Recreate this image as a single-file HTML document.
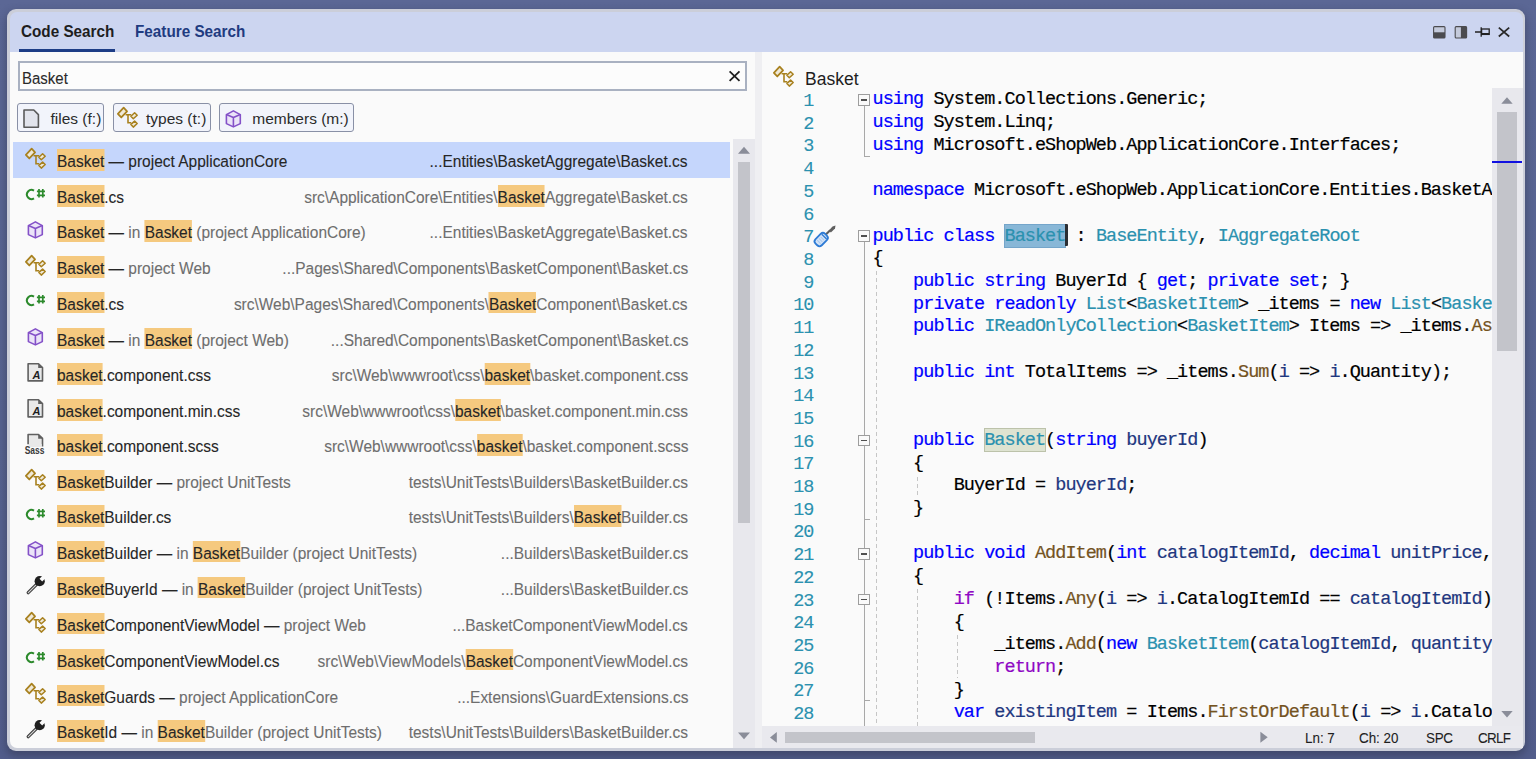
<!DOCTYPE html>
<html><head><meta charset="utf-8"><style>
*{margin:0;padding:0;box-sizing:border-box}
html,body{width:1536px;height:759px;overflow:hidden}
body{background:linear-gradient(180deg,#5b6795 0%,#56628f 70%,#525d8b 100%);font-family:"Liberation Sans",sans-serif;position:relative}
.win{position:absolute;left:7px;top:9px;width:1518px;height:742px;border-radius:9px;background:#cbced9;overflow:hidden;box-shadow:0 4px 9px 1px rgba(35,38,55,0.38)}
.hdr{position:absolute;left:3px;top:2.5px;right:2px;height:40.5px;background:#ccd5f0;border-radius:7px 7px 0 0}
.content{position:absolute;left:3px;top:43px;right:2px;bottom:3px;background:#fafafa;border-radius:0 0 7px 7px;overflow:hidden}
.abs{position:absolute}
.tab{position:absolute;top:22.4px;font-weight:bold;font-size:16.6px;line-height:20px;white-space:nowrap;transform:scaleX(0.92);transform-origin:0 0}
.row{position:absolute;left:12.8px;width:717.2px;height:35.75px;font-size:16.3px;color:#262626;white-space:nowrap;-webkit-text-stroke:0.1px currentColor}
.row.sel{background:#c5d6fc;height:36px}
.row .ic{position:absolute;left:7.2px;top:2px;width:30px;height:30px}
.row .ic.ty{top:2.3px}
.row .nm{position:absolute;left:44.2px;top:7.5px;line-height:21.5px;transform:scaleX(0.95);transform-origin:0 0}
.row .pt{position:absolute;right:42px;top:7.5px;line-height:21.5px;transform:scaleX(0.95);transform-origin:100% 0}
b.h{font-weight:normal;background:#f5c97f;color:#262626;display:inline-block;height:21.5px;padding-top:2px}
i.g{font-style:normal;color:#6e6e6e}
b.h.z{background:transparent;width:0}
.row.sel i.g{color:#262626}
.btn{position:absolute;top:103px;height:29px;border:1px solid #8990a6;border-radius:3px;background:#f2f4fb;font-size:15.5px;color:#1e1e1e;white-space:nowrap}
.btn svg{position:absolute}
.btn span{position:absolute;top:5.8px;line-height:18px;color:#2b2b2b}
.code{position:absolute;left:0;top:0;width:1536px;height:759px;font-family:"Liberation Mono",monospace;font-size:18.5px;letter-spacing:-0.95px;color:#000;-webkit-text-stroke:0.2px currentColor}
.ln{position:absolute;left:872.5px;padding-top:2.3px;line-height:22.71px;height:22.71px;white-space:pre}
.num{position:absolute;left:780px;width:33.5px;text-align:right;line-height:22.71px;color:#2b91af;padding-top:4px;height:22.71px;-webkit-text-stroke:0.1px currentColor}
.k{color:#0000ff} .c{color:#8f08c4} .t{color:#2b91af} .m{color:#74531f} .p{color:#1f377f}
.hl7{position:absolute;left:1004.2px;top:224.2px;width:61.6px;height:23.4px;background:#88b7d7;box-shadow:inset 0 0 0 1px #74a5ca}
.hl16{position:absolute;left:983.9px;top:428px;width:61.8px;height:23.5px;background:#dee3d1;box-shadow:inset 0 0 0 1px #bcc2aa}
.fb{position:absolute;left:858.2px;width:11.7px;height:11.8px;border:1px solid #9d9d9d;background:#fafafa}
.fb:after{content:"";position:absolute;left:1.9px;top:4.2px;width:5.9px;height:1.6px;background:#505050}
.dg{position:absolute;width:1px;background:repeating-linear-gradient(180deg,#c6c6c6 0 4px,transparent 4px 7px)}
.st{position:absolute;top:728.5px;font-size:15.4px;line-height:18px;color:#1e1e1e;white-space:nowrap;-webkit-text-stroke:0.1px currentColor;transform:scaleX(0.87);transform-origin:0 0}
</style></head><body>
<div class="win">
 <div class="hdr"></div>
 <div class="content"></div>
</div>
<!-- tabs -->
<div class="tab" style="left:20.6px;color:#1e1e1e">Code Search</div>
<div class="abs" style="left:19px;top:49.3px;width:96px;height:2.7px;background:#1d3d86"></div>
<div class="tab" style="left:135.4px;color:#1f3b80">Feature Search</div>
<!-- window buttons -->
<svg class="abs" style="left:1430px;top:24px" width="84" height="17" viewBox="1430 24 84 17">
 <rect x="1433.6" y="26.6" width="11.4" height="11.4" rx="1" fill="#c4cadb" stroke="#4b4b4f" stroke-width="1.1"/>
 <rect x="1433.6" y="32.3" width="11.4" height="5.7" fill="#4b4b4f"/>
 <rect x="1455.2" y="26.6" width="11.4" height="11.4" rx="1" fill="#c4cadb" stroke="#4b4b4f" stroke-width="1.1"/>
 <rect x="1460.9" y="26.6" width="5.7" height="11.4" fill="#4b4b4f"/>
 <path d="M1475 32H1481M1481.2 27.3V36.7" stroke="#222" stroke-width="1.3"/>
 <rect x="1481.6" y="29" width="7.6" height="5.4" fill="none" stroke="#222" stroke-width="1.3"/>
 <rect x="1481.6" y="33" width="7.6" height="1.6" fill="#222"/>
 <path d="M1498.8 27.7L1509.2 36.5M1509.2 27.7L1498.8 36.5" stroke="#2a2a2a" stroke-width="1.75"/>
</svg>
<!-- search box -->
<div class="abs" style="left:18px;top:61.3px;width:729px;height:29.3px;border:2px solid #a9b1c1;background:#fcfcfc"></div>
<div class="abs" style="left:21.5px;top:67.6px;font-size:16.3px;line-height:21px;color:#2a2a2a;-webkit-text-stroke:0.1px currentColor;transform:scaleX(0.92);transform-origin:0 0">Basket</div>
<svg class="abs" style="left:727px;top:69px" width="16" height="16" viewBox="0 0 16 16"><path d="M2.6 2.3L12.5 11.8M12.5 2.3L2.6 11.8" stroke="#1e1e1e" stroke-width="1.8"/></svg>
<!-- filter buttons -->
<div class="btn" style="left:17px;width:87.4px"><svg style="left:5.1px;top:4.6px" width="18" height="20" viewBox="0 0 18 20"><path d="M1 1H10.8L15.4 5.6V18.2H1Z" fill="#e2e4ec" stroke="#5a5a5a" stroke-width="1.6" stroke-linejoin="round"/></svg><span style="left:32.5px">files (f:)</span></div>
<div class="btn" style="left:113px;width:98px"><div style="position:absolute;left:-2.5px;top:-1px"><svg width="30" height="30" viewBox="0 0 30 30"><g fill="#efe9d8" stroke="#a8811f" stroke-width="1.75" stroke-linejoin="round"><polygon points="11.66,4.7 15.06,8.3 9.29,14.46 5.88,10.87"/></g><g fill="#efe9d8" stroke="#a8811f" stroke-width="1.5" stroke-linejoin="round"><polygon points="22.6,9.8 25.2,12.3 21.3,15.8 18.9,13.2"/><polygon points="22.6,18.1 25.2,20.5 21.3,24.1 18.9,21.4"/></g><path d="M13.6 11.7H19.2M16 11.7V19.8H19.2" fill="none" stroke="#a8811f" stroke-width="1.6"/></svg></div><span style="left:32px">types (t:)</span></div>
<div class="btn" style="left:219.3px;width:134.5px"><div style="position:absolute;left:-2px;top:-0.5px"><svg width="30" height="30" viewBox="0 0 30 30"><g fill="#ebe4f8" stroke="#8451c8" stroke-width="1.6" stroke-linejoin="round"><polygon points="15.4,6.9 22.3,10.6 22.3,19.6 15.4,22.9 8.4,19.6 8.4,10.6"/><path d="M8.4 10.6L15.4 13.6L22.3 10.6M15.4 13.6V22.9" fill="none"/></g></svg></div><span style="left:32px">members (m:)</span></div>
<!-- list -->
<div class="row sel" style="top:141.65px"><div class="ic ty"><svg width="30" height="30" viewBox="0 0 30 30"><g fill="#efe9d8" stroke="#a8811f" stroke-width="1.75" stroke-linejoin="round"><polygon points="11.66,4.7 15.06,8.3 9.29,14.46 5.88,10.87"/></g><g fill="#efe9d8" stroke="#a8811f" stroke-width="1.5" stroke-linejoin="round"><polygon points="22.6,9.8 25.2,12.3 21.3,15.8 18.9,13.2"/><polygon points="22.6,18.1 25.2,20.5 21.3,24.1 18.9,21.4"/></g><path d="M13.6 11.7H19.2M16 11.7V19.8H19.2" fill="none" stroke="#a8811f" stroke-width="1.6"/></svg></div><div class="nm"><b class="h z">&#8203;</b><b class="h">Basket</b> — <i class="g">project ApplicationCore</i></div><div class="pt"><i class="g">...Entities\BasketAggregate\Basket.cs</i><b class="h z">&#8203;</b></div></div><div class="row" style="top:177.55px"><div class="ic"><svg width="30" height="30" viewBox="0 0 30 30"><path d="M14 10.6A4.6 4.6 0 1 0 14 18.4" fill="none" stroke="#2c8a2c" stroke-width="2"/><path d="M19 9.1V17.4M22.8 9.1V17.4M16.9 11.3H25M16.9 15.3H25" stroke="#2c8a2c" stroke-width="1.7"/></svg></div><div class="nm"><b class="h z">&#8203;</b><b class="h">Basket</b>.cs</div><div class="pt"><i class="g">src\ApplicationCore\Entities\</i><b class="h">Basket</b><i class="g">Aggregate\Basket.cs</i><b class="h z">&#8203;</b></div></div><div class="row" style="top:212.95px"><div class="ic"><svg width="30" height="30" viewBox="0 0 30 30"><g fill="#ebe4f8" stroke="#8451c8" stroke-width="1.6" stroke-linejoin="round"><polygon points="15.4,6.9 22.3,10.6 22.3,19.6 15.4,22.9 8.4,19.6 8.4,10.6"/><path d="M8.4 10.6L15.4 13.6L22.3 10.6M15.4 13.6V22.9" fill="none"/></g></svg></div><div class="nm"><b class="h z">&#8203;</b><b class="h">Basket</b> — <i class="g">in </i><b class="h">Basket</b><i class="g"> (project ApplicationCore)</i></div><div class="pt"><i class="g">...Entities\BasketAggregate\Basket.cs</i><b class="h z">&#8203;</b></div></div><div class="row" style="top:248.85px"><div class="ic ty"><svg width="30" height="30" viewBox="0 0 30 30"><g fill="#efe9d8" stroke="#a8811f" stroke-width="1.75" stroke-linejoin="round"><polygon points="11.66,4.7 15.06,8.3 9.29,14.46 5.88,10.87"/></g><g fill="#efe9d8" stroke="#a8811f" stroke-width="1.5" stroke-linejoin="round"><polygon points="22.6,9.8 25.2,12.3 21.3,15.8 18.9,13.2"/><polygon points="22.6,18.1 25.2,20.5 21.3,24.1 18.9,21.4"/></g><path d="M13.6 11.7H19.2M16 11.7V19.8H19.2" fill="none" stroke="#a8811f" stroke-width="1.6"/></svg></div><div class="nm"><b class="h z">&#8203;</b><b class="h">Basket</b> — <i class="g">project Web</i></div><div class="pt"><i class="g">...Pages\Shared\Components\BasketComponent\Basket.cs</i><b class="h z">&#8203;</b></div></div><div class="row" style="top:284.35px"><div class="ic"><svg width="30" height="30" viewBox="0 0 30 30"><path d="M14 10.6A4.6 4.6 0 1 0 14 18.4" fill="none" stroke="#2c8a2c" stroke-width="2"/><path d="M19 9.1V17.4M22.8 9.1V17.4M16.9 11.3H25M16.9 15.3H25" stroke="#2c8a2c" stroke-width="1.7"/></svg></div><div class="nm"><b class="h z">&#8203;</b><b class="h">Basket</b>.cs</div><div class="pt"><i class="g">src\Web\Pages\Shared\Components\</i><b class="h">Basket</b><i class="g">Component\Basket.cs</i><b class="h z">&#8203;</b></div></div><div class="row" style="top:320.05px"><div class="ic"><svg width="30" height="30" viewBox="0 0 30 30"><g fill="#ebe4f8" stroke="#8451c8" stroke-width="1.6" stroke-linejoin="round"><polygon points="15.4,6.9 22.3,10.6 22.3,19.6 15.4,22.9 8.4,19.6 8.4,10.6"/><path d="M8.4 10.6L15.4 13.6L22.3 10.6M15.4 13.6V22.9" fill="none"/></g></svg></div><div class="nm"><b class="h z">&#8203;</b><b class="h">Basket</b> — <i class="g">in </i><b class="h">Basket</b><i class="g"> (project Web)</i></div><div class="pt"><i class="g">...Shared\Components\BasketComponent\Basket.cs</i><b class="h z">&#8203;</b></div></div><div class="row" style="top:355.85px"><div class="ic"><svg width="30" height="30" viewBox="0 0 30 30"><path d="M8.1 5.7H18.5L22.5 9.6V22.9H8.1Z" fill="#e9e9e9" stroke="#606060" stroke-width="1.6" stroke-linejoin="round"/><path d="M18.2 5.4L22.9 10H18.2Z" fill="#606060"/><text x="12.6" y="21.1" font-family="Liberation Sans" font-weight="bold" font-style="italic" font-size="11" fill="#1e1e1e" stroke="none">A</text></svg></div><div class="nm"><b class="h z">&#8203;</b><b class="h">basket</b>.component.css</div><div class="pt"><i class="g">src\Web\wwwroot\css\</i><b class="h">basket</b><i class="g">\basket.component.css</i><b class="h z">&#8203;</b></div></div><div class="row" style="top:391.55px"><div class="ic"><svg width="30" height="30" viewBox="0 0 30 30"><path d="M8.1 5.7H18.5L22.5 9.6V22.9H8.1Z" fill="#e9e9e9" stroke="#606060" stroke-width="1.6" stroke-linejoin="round"/><path d="M18.2 5.4L22.9 10H18.2Z" fill="#606060"/><text x="12.6" y="21.1" font-family="Liberation Sans" font-weight="bold" font-style="italic" font-size="11" fill="#1e1e1e" stroke="none">A</text></svg></div><div class="nm"><b class="h z">&#8203;</b><b class="h">basket</b>.component.min.css</div><div class="pt"><i class="g">src\Web\wwwroot\css\</i><b class="h">basket</b><i class="g">\basket.component.min.css</i><b class="h z">&#8203;</b></div></div><div class="row" style="top:426.95px"><div class="ic"><svg width="30" height="30" viewBox="0 0 30 30"><path d="M8.1 15.2V5.5H18.5L22.5 9.4V17.6" fill="#e9e9e9" stroke="#606060" stroke-width="1.6" stroke-linejoin="round"/><path d="M18.2 5.2L22.9 9.7H18.2Z" fill="#606060"/><rect x="8.9" y="15" width="12.8" height="3" fill="#e9e9e9"/><text x="4.7" y="24.9" font-family="Liberation Sans" font-weight="bold" font-size="11.8" fill="#3a3a3a" stroke="none" textLength="19.8" lengthAdjust="spacingAndGlyphs">Sass</text></svg></div><div class="nm"><b class="h z">&#8203;</b><b class="h">basket</b>.component.scss</div><div class="pt"><i class="g">src\Web\wwwroot\css\</i><b class="h">basket</b><i class="g">\basket.component.scss</i><b class="h z">&#8203;</b></div></div><div class="row" style="top:462.25px"><div class="ic ty"><svg width="30" height="30" viewBox="0 0 30 30"><g fill="#efe9d8" stroke="#a8811f" stroke-width="1.75" stroke-linejoin="round"><polygon points="11.66,4.7 15.06,8.3 9.29,14.46 5.88,10.87"/></g><g fill="#efe9d8" stroke="#a8811f" stroke-width="1.5" stroke-linejoin="round"><polygon points="22.6,9.8 25.2,12.3 21.3,15.8 18.9,13.2"/><polygon points="22.6,18.1 25.2,20.5 21.3,24.1 18.9,21.4"/></g><path d="M13.6 11.7H19.2M16 11.7V19.8H19.2" fill="none" stroke="#a8811f" stroke-width="1.6"/></svg></div><div class="nm"><b class="h z">&#8203;</b><b class="h">Basket</b>Builder — <i class="g">project UnitTests</i></div><div class="pt"><i class="g">tests\UnitTests\Builders\BasketBuilder.cs</i><b class="h z">&#8203;</b></div></div><div class="row" style="top:497.55px"><div class="ic"><svg width="30" height="30" viewBox="0 0 30 30"><path d="M14 10.6A4.6 4.6 0 1 0 14 18.4" fill="none" stroke="#2c8a2c" stroke-width="2"/><path d="M19 9.1V17.4M22.8 9.1V17.4M16.9 11.3H25M16.9 15.3H25" stroke="#2c8a2c" stroke-width="1.7"/></svg></div><div class="nm"><b class="h z">&#8203;</b><b class="h">Basket</b>Builder.cs</div><div class="pt"><i class="g">tests\UnitTests\Builders\</i><b class="h">Basket</b><i class="g">Builder.cs</i><b class="h z">&#8203;</b></div></div><div class="row" style="top:533.45px"><div class="ic"><svg width="30" height="30" viewBox="0 0 30 30"><g fill="#ebe4f8" stroke="#8451c8" stroke-width="1.6" stroke-linejoin="round"><polygon points="15.4,6.9 22.3,10.6 22.3,19.6 15.4,22.9 8.4,19.6 8.4,10.6"/><path d="M8.4 10.6L15.4 13.6L22.3 10.6M15.4 13.6V22.9" fill="none"/></g></svg></div><div class="nm"><b class="h z">&#8203;</b><b class="h">Basket</b>Builder — <i class="g">in </i><b class="h">Basket</b><i class="g">Builder (project UnitTests)</i></div><div class="pt"><i class="g">...Builders\BasketBuilder.cs</i><b class="h z">&#8203;</b></div></div><div class="row" style="top:569.35px"><div class="ic"><svg width="30" height="30" viewBox="0 0 30 30"><path d="M16.6 13.3L8.2 21.7" stroke="#3c3c3c" stroke-width="3.3" stroke-linecap="round"/><path d="M15.6 14.3L8.3 21.6" stroke="#d4d4d4" stroke-width="1.2" stroke-linecap="round"/><circle cx="19.7" cy="10.2" r="5.1" fill="#1f1f1f"/><rect x="1.6" y="-1.9" width="6" height="3.8" fill="#fafafa" transform="translate(19.7 10.2) rotate(-45)"/></svg></div><div class="nm"><b class="h z">&#8203;</b><b class="h">Basket</b>BuyerId — <i class="g">in </i><b class="h">Basket</b><i class="g">Builder (project UnitTests)</i></div><div class="pt"><i class="g">...Builders\BasketBuilder.cs</i><b class="h z">&#8203;</b></div></div><div class="row" style="top:605.45px"><div class="ic ty"><svg width="30" height="30" viewBox="0 0 30 30"><g fill="#efe9d8" stroke="#a8811f" stroke-width="1.75" stroke-linejoin="round"><polygon points="11.66,4.7 15.06,8.3 9.29,14.46 5.88,10.87"/></g><g fill="#efe9d8" stroke="#a8811f" stroke-width="1.5" stroke-linejoin="round"><polygon points="22.6,9.8 25.2,12.3 21.3,15.8 18.9,13.2"/><polygon points="22.6,18.1 25.2,20.5 21.3,24.1 18.9,21.4"/></g><path d="M13.6 11.7H19.2M16 11.7V19.8H19.2" fill="none" stroke="#a8811f" stroke-width="1.6"/></svg></div><div class="nm"><b class="h z">&#8203;</b><b class="h">Basket</b>ComponentViewModel — <i class="g">project Web</i></div><div class="pt"><i class="g">...BasketComponentViewModel.cs</i><b class="h z">&#8203;</b></div></div><div class="row" style="top:641.25px"><div class="ic"><svg width="30" height="30" viewBox="0 0 30 30"><path d="M14 10.6A4.6 4.6 0 1 0 14 18.4" fill="none" stroke="#2c8a2c" stroke-width="2"/><path d="M19 9.1V17.4M22.8 9.1V17.4M16.9 11.3H25M16.9 15.3H25" stroke="#2c8a2c" stroke-width="1.7"/></svg></div><div class="nm"><b class="h z">&#8203;</b><b class="h">Basket</b>ComponentViewModel.cs</div><div class="pt"><i class="g">src\Web\ViewModels\</i><b class="h">Basket</b><i class="g">ComponentViewModel.cs</i><b class="h z">&#8203;</b></div></div><div class="row" style="top:677.15px"><div class="ic ty"><svg width="30" height="30" viewBox="0 0 30 30"><g fill="#efe9d8" stroke="#a8811f" stroke-width="1.75" stroke-linejoin="round"><polygon points="11.66,4.7 15.06,8.3 9.29,14.46 5.88,10.87"/></g><g fill="#efe9d8" stroke="#a8811f" stroke-width="1.5" stroke-linejoin="round"><polygon points="22.6,9.8 25.2,12.3 21.3,15.8 18.9,13.2"/><polygon points="22.6,18.1 25.2,20.5 21.3,24.1 18.9,21.4"/></g><path d="M13.6 11.7H19.2M16 11.7V19.8H19.2" fill="none" stroke="#a8811f" stroke-width="1.6"/></svg></div><div class="nm"><b class="h z">&#8203;</b><b class="h">Basket</b>Guards — <i class="g">project ApplicationCore</i></div><div class="pt"><i class="g">...Extensions\GuardExtensions.cs</i><b class="h z">&#8203;</b></div></div><div class="row" style="top:712.95px"><div class="ic"><svg width="30" height="30" viewBox="0 0 30 30"><path d="M16.6 13.3L8.2 21.7" stroke="#3c3c3c" stroke-width="3.3" stroke-linecap="round"/><path d="M15.6 14.3L8.3 21.6" stroke="#d4d4d4" stroke-width="1.2" stroke-linecap="round"/><circle cx="19.7" cy="10.2" r="5.1" fill="#1f1f1f"/><rect x="1.6" y="-1.9" width="6" height="3.8" fill="#fafafa" transform="translate(19.7 10.2) rotate(-45)"/></svg></div><div class="nm"><b class="h z">&#8203;</b><b class="h">Basket</b>Id — <i class="g">in </i><b class="h">Basket</b><i class="g">Builder (project UnitTests)</i></div><div class="pt"><i class="g">tests\UnitTests\Builders\BasketBuilder.cs</i><b class="h z">&#8203;</b></div></div>
<!-- list scrollbar -->
<div class="abs" style="left:732.8px;top:139px;width:22.2px;height:609px;background:#e8e8ed"></div>
<svg class="abs" style="left:733px;top:140px" width="22" height="20" viewBox="0 0 22 20"><path d="M5 13.7L11 6.8L17 13.7Z" fill="#8a8d99"/></svg>
<div class="abs" style="left:738px;top:161.6px;width:12px;height:361px;background:#c3c4ca"></div>
<svg class="abs" style="left:733px;top:726px" width="22" height="20" viewBox="0 0 22 20"><path d="M5 6.5L11 13.3L17 6.5Z" fill="#8a8d99"/></svg>
<div class="abs" style="left:755px;top:52px;width:7px;height:696px;background:#efeff2"></div>
<!-- right header -->
<div class="abs" style="left:768px;top:62px;width:30px;height:30px"><svg width="30" height="30" viewBox="0 0 30 30"><g fill="#efe9d8" stroke="#a8811f" stroke-width="1.75" stroke-linejoin="round"><polygon points="11.66,4.7 15.06,8.3 9.29,14.46 5.88,10.87"/></g><g fill="#efe9d8" stroke="#a8811f" stroke-width="1.5" stroke-linejoin="round"><polygon points="22.6,9.8 25.2,12.3 21.3,15.8 18.9,13.2"/><polygon points="22.6,18.1 25.2,20.5 21.3,24.1 18.9,21.4"/></g><path d="M13.6 11.7H19.2M16 11.7V19.8H19.2" fill="none" stroke="#a8811f" stroke-width="1.6"/></svg></div>
<div class="abs" style="left:805px;top:67.5px;font-size:17.5px;line-height:22px;color:#1e1e1e">Basket</div>
<!-- code -->
<div class="code">
<div class="num" style="top:87.00px">1</div><div class="num" style="top:109.71px">2</div><div class="num" style="top:132.42px">3</div><div class="num" style="top:155.13px">4</div><div class="num" style="top:177.84px">5</div><div class="num" style="top:200.55px">6</div><div class="num" style="top:223.26px">7</div><div class="num" style="top:245.97px">8</div><div class="num" style="top:268.68px">9</div><div class="num" style="top:291.39px">10</div><div class="num" style="top:314.10px">11</div><div class="num" style="top:336.81px">12</div><div class="num" style="top:359.52px">13</div><div class="num" style="top:382.23px">14</div><div class="num" style="top:404.94px">15</div><div class="num" style="top:427.65px">16</div><div class="num" style="top:450.36px">17</div><div class="num" style="top:473.07px">18</div><div class="num" style="top:495.78px">19</div><div class="num" style="top:518.49px">20</div><div class="num" style="top:541.20px">21</div><div class="num" style="top:563.91px">22</div><div class="num" style="top:586.62px">23</div><div class="num" style="top:609.33px">24</div><div class="num" style="top:632.04px">25</div><div class="num" style="top:654.75px">26</div><div class="num" style="top:677.46px">27</div><div class="num" style="top:700.17px">28</div>
<div class="dg" style="left:876px;top:271px;height:454.80px"></div><div class="dg" style="left:917px;top:476.5px;height:18.00px"></div><div class="dg" style="left:917px;top:589px;height:136.80px"></div><div class="dg" style="left:957.2px;top:635px;height:42.60px"></div>
<div class="abs" style="left:864.2px;top:100px;width:1px;height:56.7px;background:#a8a8a8"></div>
<div class="abs" style="left:864.2px;top:155.9px;width:6px;height:1px;background:#a8a8a8"></div>
<div class="abs" style="left:864.2px;top:236px;width:1px;height:489.8px;background:#a8a8a8"></div>
<div class="abs" style="left:864.2px;top:518.9px;width:6px;height:1px;background:#a8a8a8"></div>
<div class="abs" style="left:864.2px;top:700.3px;width:6px;height:1px;background:#a8a8a8"></div>
<div class="fb" style="top:94.00px"></div><div class="fb" style="top:230.26px"></div><div class="fb" style="top:434.65px"></div><div class="fb" style="top:548.20px"></div><div class="fb" style="top:593.62px"></div>
<div class="hl7"></div><div class="hl16"></div>
<div style="position:absolute;left:0;top:0;width:1492px;height:725.8px;overflow:hidden">
<div class="ln" style="top:87.00px"><span class="k">using</span> System.Collections.Generic;</div><div class="ln" style="top:109.71px"><span class="k">using</span> System.Linq;</div><div class="ln" style="top:132.42px"><span class="k">using</span> Microsoft.eShopWeb.ApplicationCore.Interfaces;</div><div class="ln" style="top:155.13px"></div><div class="ln" style="top:177.84px"><span class="k">namespace</span> Microsoft.eShopWeb.ApplicationCore.Entities.BasketAggregate;</div><div class="ln" style="top:200.55px"></div><div class="ln" style="top:223.26px"><span class="k">public</span> <span class="k">class</span> <span class="t sel7">Basket</span> : <span class="t">BaseEntity</span>, <span class="t">IAggregateRoot</span></div><div class="ln" style="top:245.97px">{</div><div class="ln" style="top:268.68px">    <span class="k">public</span> <span class="k">string</span> BuyerId { <span class="k">get</span>; <span class="k">private</span> <span class="k">set</span>; }</div><div class="ln" style="top:291.39px">    <span class="k">private</span> <span class="k">readonly</span> <span class="t">List</span>&lt;<span class="t">BasketItem</span>&gt; _items = <span class="k">new</span> <span class="t">List</span>&lt;<span class="t">BasketItem</span>&gt;();</div><div class="ln" style="top:314.10px">    <span class="k">public</span> <span class="t">IReadOnlyCollection</span>&lt;<span class="t">BasketItem</span>&gt; Items =&gt; _items.<span class="m">AsReadOnly</span>();</div><div class="ln" style="top:336.81px"></div><div class="ln" style="top:359.52px">    <span class="k">public</span> <span class="k">int</span> TotalItems =&gt; _items.<span class="m">Sum</span>(<span class="p">i</span> =&gt; <span class="p">i</span>.Quantity);</div><div class="ln" style="top:382.23px"></div><div class="ln" style="top:404.94px"></div><div class="ln" style="top:427.65px">    <span class="k">public</span> <span class="t sel16">Basket</span>(<span class="k">string</span> <span class="p">buyerId</span>)</div><div class="ln" style="top:450.36px">    {</div><div class="ln" style="top:473.07px">        BuyerId = <span class="p">buyerId</span>;</div><div class="ln" style="top:495.78px">    }</div><div class="ln" style="top:518.49px"></div><div class="ln" style="top:541.20px">    <span class="k">public</span> <span class="k">void</span> <span class="m">AddItem</span>(<span class="k">int</span> <span class="p">catalogItemId</span>, <span class="k">decimal</span> <span class="p">unitPrice</span>, <span class="k">int</span> <span class="p">quantity</span> = 1)</div><div class="ln" style="top:563.91px">    {</div><div class="ln" style="top:586.62px">        <span class="c">if</span> (!Items.<span class="m">Any</span>(<span class="p">i</span> =&gt; <span class="p">i</span>.CatalogItemId == <span class="p">catalogItemId</span>))</div><div class="ln" style="top:609.33px">        {</div><div class="ln" style="top:632.04px">            _items.<span class="m">Add</span>(<span class="k">new</span> <span class="t">BasketItem</span>(<span class="p">catalogItemId</span>, <span class="p">quantity</span>, <span class="p">unitPrice</span>));</div><div class="ln" style="top:654.75px">            <span class="c">return</span>;</div><div class="ln" style="top:677.46px">        }</div><div class="ln" style="top:700.17px">        <span class="k">var</span> <span class="p">existingItem</span> = Items.<span class="m">FirstOrDefault</span>(<span class="p">i</span> =&gt; <span class="p">i</span>.CatalogItemId == <span class="p">catalogItemId</span>);</div>
</div>
<div class="abs" style="left:1065.4px;top:224px;width:2.5px;height:21.8px;background:#2b2e33;border-radius:0 1px 1px 0"></div>
</div>
<svg class="abs" style="left:808px;top:218px" width="40" height="34" viewBox="0 0 40 34"><path d="M17.8 16.6L22.2 12.3" stroke="#5f5f5f" stroke-width="2.1"/><path d="M20.9 12.6L24.5 8.4L27.5 7.5L27 10.5L22.9 14.4Z" fill="#5f5f5f"/><g transform="rotate(-45 13.2 21.6)"><rect x="6.4" y="17.2" width="13.6" height="8.8" rx="3.2" fill="#d3e3f7" stroke="#2e7bd5" stroke-width="1.8"/><path d="M10 19.2V24M12.4 19.2V24M14.8 19.2V24" stroke="#a9c8ee" stroke-width="1"/><path d="M17.4 18.2V25" stroke="#2e7bd5" stroke-width="1.4"/></g></svg>
<!-- right v scrollbar -->
<div class="abs" style="left:1492px;top:88px;width:31px;height:637.8px;background:#e8e8ed"></div>
<svg class="abs" style="left:1492px;top:90px" width="31" height="20" viewBox="0 0 31 20"><path d="M9.3 13.8L15 7.3L20.7 13.8Z" fill="#8a8d99"/></svg>
<div class="abs" style="left:1497px;top:112px;width:20.3px;height:239px;background:#c3c4ca"></div>
<div class="abs" style="left:1492px;top:160.6px;width:30px;height:2.2px;background:#1010e0"></div>
<svg class="abs" style="left:1492px;top:704px" width="31" height="20" viewBox="0 0 31 20"><path d="M9.3 7L15 13.4L20.7 7Z" fill="#8a8d99"/></svg>
<!-- bottom bar -->
<div class="abs" style="left:762px;top:725.8px;width:761px;height:22.4px;background:#e9e9ee"></div>
<svg class="abs" style="left:765px;top:728px" width="16" height="18" viewBox="0 0 16 18"><path d="M11.8 4L5 9.4L11.8 14.8Z" fill="#8a8d99"/></svg>
<div class="abs" style="left:784.6px;top:731.8px;width:250px;height:11px;background:#c3c4ca"></div>
<svg class="abs" style="left:1256px;top:728px" width="16" height="18" viewBox="0 0 16 18"><path d="M4.4 3.7L11.7 9.2L4.4 14.7Z" fill="#8a8d99"/></svg>
<div class="st" style="left:1305px">Ln: 7</div>
<div class="st" style="left:1359px">Ch: 20</div>
<div class="st" style="left:1425.6px;letter-spacing:-0.3px">SPC</div>
<div class="st" style="left:1477.5px;letter-spacing:-0.8px">CRLF</div>
</body></html>
